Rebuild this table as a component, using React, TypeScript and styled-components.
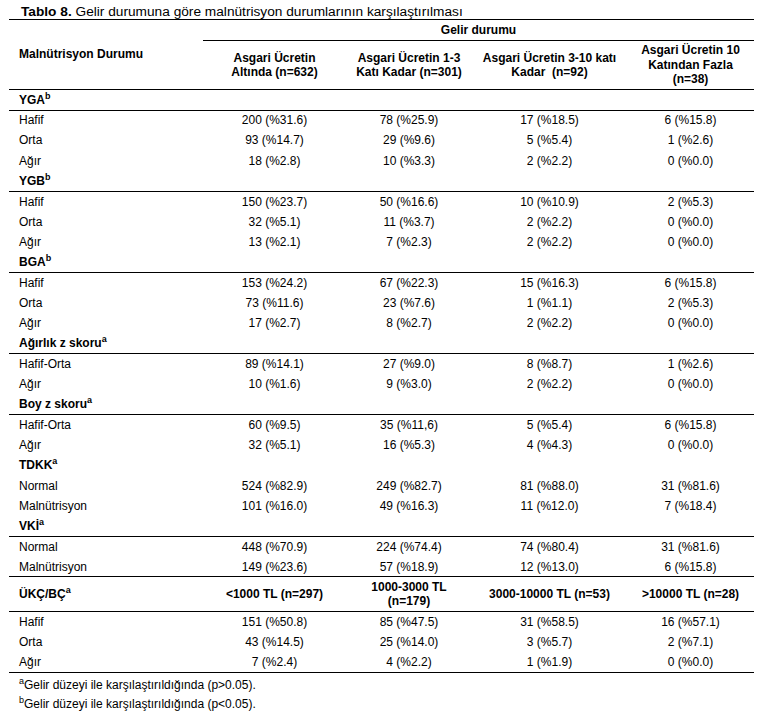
import React from "react";
import styled, { createGlobalStyle } from "styled-components";

const GlobalStyle = createGlobalStyle`
  body {
    margin: 0;
    background: #fff;
    color: #000;
    font-family: "Liberation Sans", Arial, sans-serif;
  }
`;

const Page = styled.div`
  padding: 4px 10px 0 9px;
  width: 745px;
`;

const Title = styled.div`
  font-size: 13.7px;
  line-height: 15px;
  padding-left: 12px;
  b {
    font-weight: bold;
  }
`;

const Table = styled.table`
  width: 745px;
  border-collapse: collapse;
  table-layout: fixed;
  font-size: 12px;
  border-top: 1px solid #000;
  border-bottom: 1px solid #000;
`;

const HeadCell = styled.th<{ $line?: boolean; $left?: boolean }>`
  font-weight: bold;
  line-height: 14.5px;
  padding: 0 4px;
  vertical-align: middle;
  text-align: ${(p) => (p.$left ? "left" : "center")};
  padding-left: ${(p) => (p.$left ? "10px" : "4px")};
  border-bottom: ${(p) => (p.$line ? "1px solid #000" : "none")};
`;

const Row = styled.tr<{ $h?: number; $line?: boolean }>`
  height: ${(p) => p.$h ?? 20.2}px;
  border-bottom: ${(p) => (p.$line ? "1px solid #000" : "none")};
`;

const LabelCell = styled.td<{ $bold?: boolean }>`
  padding: 0 0 0 10px;
  font-weight: ${(p) => (p.$bold ? "bold" : "normal")};
  white-space: nowrap;
  vertical-align: middle;
`;

const ValueCell = styled.td`
  text-align: center;
  vertical-align: middle;
  padding: 0;
  white-space: nowrap;
`;

const Sup = styled.sup`
  font-size: 9px;
  line-height: 0;
  vertical-align: 5px;
`;

const Notes = styled.div`
  padding: 3px 0 0 10px;
  font-size: 12px;
  line-height: 19px;
`;

type Group = { label: string; sup: string; line: boolean; rows: string[][] };

const groups: Group[] = [
  {
    label: "YGA",
    sup: "b",
    line: true,
    rows: [
      ["Hafif", "200 (%31.6)", "78 (%25.9)", "17 (%18.5)", "6 (%15.8)"],
      ["Orta", "93 (%14.7)", "29 (%9.6)", "5 (%5.4)", "1 (%2.6)"],
      ["Ağır", "18 (%2.8)", "10 (%3.3)", "2 (%2.2)", "0 (%0.0)"],
    ],
  },
  {
    label: "YGB",
    sup: "b",
    line: true,
    rows: [
      ["Hafif", "150 (%23.7)", "50 (%16.6)", "10 (%10.9)", "2 (%5.3)"],
      ["Orta", "32 (%5.1)", "11 (%3.7)", "2 (%2.2)", "0 (%0.0)"],
      ["Ağır", "13 (%2.1)", "7 (%2.3)", "2 (%2.2)", "0 (%0.0)"],
    ],
  },
  {
    label: "BGA",
    sup: "b",
    line: true,
    rows: [
      ["Hafif", "153 (%24.2)", "67 (%22.3)", "15 (%16.3)", "6 (%15.8)"],
      ["Orta", "73 (%11.6)", "23 (%7.6)", "1 (%1.1)", "2 (%5.3)"],
      ["Ağır", "17 (%2.7)", "8 (%2.7)", "2 (%2.2)", "0 (%0.0)"],
    ],
  },
  {
    label: "Ağırlık z skoru",
    sup: "a",
    line: true,
    rows: [
      ["Hafif-Orta", "89 (%14.1)", "27 (%9.0)", "8 (%8.7)", "1 (%2.6)"],
      ["Ağır", "10 (%1.6)", "9 (%3.0)", "2 (%2.2)", "0 (%0.0)"],
    ],
  },
  {
    label: "Boy z skoru",
    sup: "a",
    line: true,
    rows: [
      ["Hafif-Orta", "60 (%9.5)", "35 (%11,6)", "5 (%5.4)", "6 (%15.8)"],
      ["Ağır", "32 (%5.1)", "16 (%5.3)", "4 (%4.3)", "0 (%0.0)"],
    ],
  },
  {
    label: "TDKK",
    sup: "a",
    line: false,
    rows: [
      ["Normal", "524 (%82.9)", "249 (%82.7)", "81 (%88.0)", "31 (%81.6)"],
      ["Malnütrisyon", "101 (%16.0)", "49 (%16.3)", "11 (%12.0)", "7 (%18.4)"],
    ],
  },
  {
    label: "VKİ",
    sup: "a",
    line: true,
    rows: [
      ["Normal", "448 (%70.9)", "224 (%74.4)", "74 (%80.4)", "31 (%81.6)"],
      ["Malnütrisyon", "149 (%23.6)", "57 (%18.9)", "12 (%13.0)", "6 (%15.8)"],
    ],
  },
];

const incomeRows = [
  ["Hafif", "151 (%50.8)", "85 (%47.5)", "31 (%58.5)", "16 (%57.1)"],
  ["Orta", "43 (%14.5)", "25 (%14.0)", "3 (%5.7)", "2 (%7.1)"],
  ["Ağır", "7 (%2.4)", "4 (%2.2)", "1 (%1.9)", "0 (%0.0)"],
];

const DataRow = ({ cells, line }: { cells: string[]; line?: boolean }) => (
  <Row $line={line}>
    <LabelCell>{cells[0]}</LabelCell>
    {cells.slice(1).map((c, i) => (
      <ValueCell key={i}>{c}</ValueCell>
    ))}
  </Row>
);

export default function App() {
  return (
    <>
      <GlobalStyle />
      <Page>
        <Title>
          <b>Tablo 8.</b> Gelir durumuna göre malnütrisyon durumlarının karşılaştırılması
        </Title>
        <Table>
          <colgroup>
            <col style={{ width: 194 }} />
            <col style={{ width: 143 }} />
            <col style={{ width: 126 }} />
            <col style={{ width: 155 }} />
            <col style={{ width: 127 }} />
          </colgroup>
          <thead>
            <Row $h={21}>
              <HeadCell $left $line rowSpan={2}>
                Malnütrisyon Durumu
              </HeadCell>
              <HeadCell $line colSpan={4}>
                Gelir durumu
              </HeadCell>
            </Row>
            <Row $h={49}>
              <HeadCell $line>
                Asgari Ücretin
                <br />
                Altında (n=632)
              </HeadCell>
              <HeadCell $line>
                Asgari Ücretin 1-3
                <br />
                Katı Kadar (n=301)
              </HeadCell>
              <HeadCell $line>
                Asgari Ücretin 3-10 katı
                <br />
                Kadar&nbsp; (n=92)
              </HeadCell>
              <HeadCell $line>
                Asgari Ücretin 10
                <br />
                Katından Fazla
                <br />
                (n=38)
              </HeadCell>
            </Row>
          </thead>
          <tbody>
            {groups.map((g) => (
              <React.Fragment key={g.label}>
                <Row $line={g.line} $h={20.6}>
                  <LabelCell $bold colSpan={5}>
                    {g.label}
                    <Sup>{g.sup}</Sup>
                  </LabelCell>
                </Row>
                {g.rows.map((r, i) => (
                  <DataRow
                    key={i}
                    cells={r}
                    line={g.label === "VKİ" && i === g.rows.length - 1}
                  />
                ))}
              </React.Fragment>
            ))}
            <Row $line $h={35}>
              <LabelCell $bold>
                ÜKÇ/BÇ<Sup>a</Sup>
              </LabelCell>
              <HeadCell>&lt;1000 TL (n=297)</HeadCell>
              <HeadCell>
                1000-3000 TL
                <br />
                (n=179)
              </HeadCell>
              <HeadCell>3000-10000 TL (n=53)</HeadCell>
              <HeadCell>&gt;10000 TL (n=28)</HeadCell>
            </Row>
            {incomeRows.map((r, i) => (
              <DataRow key={i} cells={r} />
            ))}
          </tbody>
        </Table>
        <Notes>
          <div>
            <Sup>a</Sup>Gelir düzeyi ile karşılaştırıldığında (p&gt;0.05).
          </div>
          <div>
            <Sup>b</Sup>Gelir düzeyi ile karşılaştırıldığında (p&lt;0.05).
          </div>
        </Notes>
      </Page>
    </>
  );
}
